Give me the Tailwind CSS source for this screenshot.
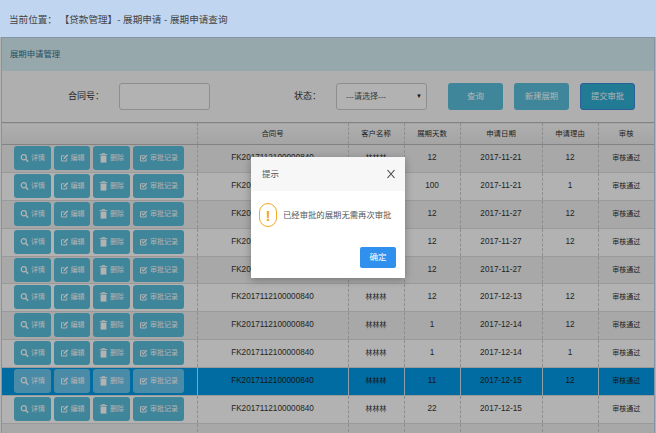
<!DOCTYPE html>
<html lang="en">

<head>
    <meta charset="UTF-8">
    <title>展期申请查询</title>
    <script src="https://cdn.jsdelivr.net/npm/@tailwindcss/browser@4"></script>
</head>

<body class="relative w-[656px] h-[433px] overflow-hidden bg-white font-['Liberation_Sans','Noto_Sans_CJK_SC',sans-serif] text-[#333]">
    <svg class="hidden">
        <symbol id="i-search" viewBox="0 0 12 12"><circle cx="5" cy="5" r="3.4" fill="none" stroke="currentColor" stroke-width="1.6"/><path d="M7.6 7.6L11 11" stroke="currentColor" stroke-width="2"/></symbol>
        <symbol id="i-edit" viewBox="0 0 12 12"><path d="M9 6.5V10H2V3h4" fill="none" stroke="currentColor" stroke-width="1.3"/><path d="M4.5 7.5L5 5.5L9.5 1L11 2.5L6.5 7Z" fill="currentColor"/></symbol>
        <symbol id="i-trash" viewBox="0 0 10 12"><path d="M1.500 3h7V11.500h-7Z" fill="currentColor"/><path d="M.5 1.800h9M3.500 1.800V.6h3V1.800" fill="none" stroke="currentColor" stroke-width="1"/></symbol>
        <symbol id="i-check" viewBox="0 0 12 12"><path d="M9.5 6.5V10h-7.500V3h6" fill="none" stroke="currentColor" stroke-width="1.300"/><path d="M3.800 5.300L5.800 7.300L10.500 2.300" fill="none" stroke="currentColor" stroke-width="1.600"/></symbol>
    </svg>

    <div class="h-[37px] bg-[#c0d5ef] pl-[9px] text-[9.600px] leading-[40px] text-[#444]">当前位置：&nbsp;【贷款管理】- 展期申请 - 展期申请查询</div>

    <div class="relative h-[396px] overflow-hidden bg-white">
        <div class="mx-px h-full border-x border-t border-[#c0d5ef] bg-[#fbfbfb]">
            <div class="h-[33px] bg-[#d9f1f6] pl-[8px] text-[8.400px] leading-[33px] text-[#31708f]">展期申请管理</div>

            <div class="flex h-[51px] items-center text-[9px] bg-[#fbfbfb]">
                <span class="ml-[66px] w-[51px]">合同号：</span>
                <div class="h-[27px] w-[91px] rounded-[3px] border border-[#ccc] bg-white"></div>
                <span class="ml-[84px] w-[42px]">状态：</span>
                <div class="flex h-[27px] w-[91px] items-center justify-between rounded-[3px] border border-[#ccc] bg-white pl-[9px] pr-[4px] text-[8px] text-[#555]">
                    <span>---请选择---</span><span class="text-[6px] text-[#222]">▼</span>
                </div>
                <button class="ml-[21px] h-[27px] w-[55px] rounded-[3px] bg-[#5bc0de] text-[8.500px] text-white">查询</button>
                <button class="ml-[11px] h-[27px] w-[55px] rounded-[3px] bg-[#5bc0de] text-[8.300px] text-white">新建展期</button>
                <button class="ml-[11px] h-[27px] w-[55px] rounded-[3px] border border-[#3d88d8] bg-[#31b0d5] text-[8.300px] text-white">提交审批</button>
            </div>

            <table class="w-[652px] table-fixed border-collapse text-center text-[8.200px]">
                <colgroup>
                    <col class="w-[195px]"><col class="w-[151px]"><col class="w-[56px]"><col class="w-[56px]"><col class="w-[82px]"><col class="w-[56px]"><col class="w-[56px]">
                </colgroup>
                <thead>
                    <tr class="h-[22px] border-y border-[#bbb] bg-gradient-to-b from-[#fafafa] to-[#ececec] text-[7.400px]">
                        <th class="font-normal"></th>
                        <th class="border-l border-dashed border-[#ccc] font-normal">合同号</th>
                        <th class="border-l border-dashed border-[#ccc] font-normal">客户名称</th>
                        <th class="border-l border-dashed border-[#ccc] font-normal">展期天数</th>
                        <th class="border-l border-dashed border-[#ccc] font-normal">申请日期</th>
                        <th class="border-l border-dashed border-[#ccc] font-normal">申请理由</th>
                        <th class="border-l border-dashed border-[#ccc] font-normal">审核</th>
                    </tr>
                </thead>
                <tbody id="rows"></tbody>
            </table>
        </div>

        <!-- backdrop -->
        <div class="absolute inset-0 bg-black/30"></div>

        <div class="absolute left-[251px] top-[120px] w-[154px] h-[121px] bg-white shadow-[0_2px_8px_rgba(0,0,0,0.3)]">
            <div class="flex h-[34px] items-center justify-between bg-[#f7f7f7] pl-[11px] pr-[9px] text-[8.500px] text-[#555]">
                <span>提示</span>
                <svg class="h-[10px] w-[10px] text-[#444]" viewBox="0 0 10 10"><path d="M1.500 1L8.500 9M8.500 1L1.500 9" stroke="currentColor" stroke-width="1.100"/></svg>
            </div>
            <div class="flex items-center pl-[8px] pt-[12px]">
                <div class="flex h-[24px] w-[18px] shrink-0 items-center justify-center rounded-full border-[1.500px] border-[#f5a623] text-[15px] leading-none font-bold text-[#f5a623]">!</div>
                <span class="ml-[6px] whitespace-nowrap pt-px text-[8.350px] text-[#555]">已经审批的展期无需再次审批</span>
            </div>
            <button class="absolute left-[109px] top-[90px] h-[21px] w-[36px] rounded-[2px] bg-[#2f90ee] text-[8.500px] text-white">确定</button>
        </div>
    </div>

    <script>
        const data = [
            ['12', '2017-11-21', '12'], ['100', '2017-11-21', '1'], ['12', '2017-11-27', '12'],
            ['12', '2017-11-27', '12'], ['12', '2017-11-27', ''], ['12', '2017-12-13', '12'],
            ['1', '2017-12-14', '12'], ['1', '2017-12-14', '1'], ['11', '2017-12-15', '12'],
            ['22', '2017-12-15', '']
        ];
        const btn = (icon, text, w, cls) => `<span class="flex h-[24px] ${w} items-center justify-center gap-[2px] rounded-[3px] ${cls} text-[7px] text-white"><svg class="h-[10px] w-[9px]"><use href="#${icon}"/></svg>${text}</span>`;
        let html = '';
        data.forEach((d, i) => {
            const sel = i === 8;
            const rowCls = sel ? 'bg-[#009be8] text-[#222]' : (i % 2 === 0 ? 'bg-[#f1f1f1]' : 'bg-[#ffffff]');
            const bc = sel ? 'bg-[#6ac8f0]' : 'bg-[#5bc0de]';
            const td = sel ? 'border-l border-[#cfe6f2]' : 'border-l border-dashed border-[#ccc]';
            // one shorter row: the 10 rows in the picture are not quite 28px apart
            const h = i === 4 ? 'h-[27px]' : 'h-[28px]';
            html += `<tr class="${h} border-b border-[#ddd] ${rowCls}">
                <td class="align-top pt-px"><div class="flex pl-[12px] gap-[3px]">${btn('i-search', '详情', 'w-[37px]', bc)}${btn('i-edit', '编辑', 'w-[36px]', bc)}${btn('i-trash', '删除', 'w-[37px]', bc)}${btn('i-check', '审批记录', 'w-[51px]', bc)}</div></td>
                <td class="${td} whitespace-nowrap">FK2017112100000840</td>
                <td class="${td} text-[7px]">林林林</td>
                <td class="${td}">${d[0]}</td>
                <td class="${td}">${d[1]}</td>
                <td class="${td}">${d[2]}</td>
                <td class="${td} text-[7px]">审核通过</td>
            </tr>`;
        });
        html += `<tr class="h-[28px] bg-[#f1f1f1]"><td></td><td class="border-l border-dashed border-[#ccc]"></td><td class="border-l border-dashed border-[#ccc]"></td><td class="border-l border-dashed border-[#ccc]"></td><td class="border-l border-dashed border-[#ccc]"></td><td class="border-l border-dashed border-[#ccc]"></td><td class="border-l border-dashed border-[#ccc]"></td></tr>`;
        document.getElementById('rows').innerHTML = html;
    </script>
</body>
</html>
